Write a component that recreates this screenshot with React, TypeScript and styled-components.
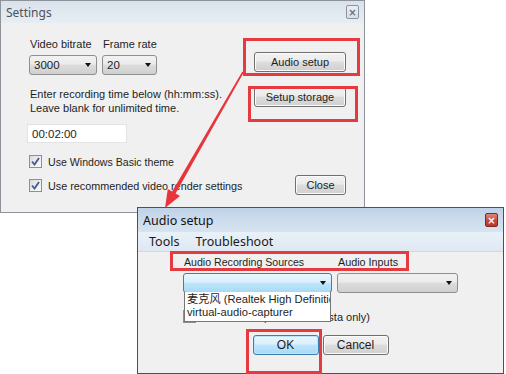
import styled, { createGlobalStyle, css } from "styled-components";

const GlobalStyle = createGlobalStyle`
  html, body {
    margin: 0;
    padding: 0;
    background: #ffffff;
  }
`;

const Canvas = styled.div`
  position: relative;
  width: 506px;
  height: 374px;
  overflow: hidden;
  background: #ffffff;
  font-family: "Liberation Sans", "Noto Sans CJK SC", sans-serif;
  font-size: 11px;
  color: #1e1e1e;
`;

const Window = styled.div<{ $left: number; $top: number; $width: number; $height: number; $active?: boolean }>`
  position: absolute;
  left: ${(p) => p.$left}px;
  top: ${(p) => p.$top}px;
  width: ${(p) => p.$width}px;
  height: ${(p) => p.$height}px;
  box-sizing: border-box;
  display: flex;
  flex-direction: column;
  background: #f0f0f0;
  border: 1px solid ${(p) => (p.$active ? "#4b5158" : "#8d9399")};
`;

const TitleBar = styled.div<{ $active?: boolean; $height: number }>`
  height: ${(p) => p.$height}px;
  flex: none;
  display: flex;
  align-items: center;
  justify-content: space-between;
  padding: 0 5px;
  font-family: "Noto Sans", sans-serif;
  background: ${(p) =>
    p.$active
      ? "linear-gradient(#bfd2e8, #cfdeee 60%, #d6e3f0)"
      : "linear-gradient(#d9e2ec, #e2e9f1 60%, #e7edf3)"};
`;

const TitleText = styled.span<{ $active?: boolean }>`
  font-size: ${(p) => (p.$active ? 12.5 : 12)}px;
  color: ${(p) => (p.$active ? "#111" : "#4c5259")};
`;

const CloseBox = styled.span<{ $active?: boolean }>`
  width: 13px;
  height: 14px;
  box-sizing: border-box;
  display: flex;
  align-items: center;
  justify-content: center;
  border-radius: 2px;
  font-family: "DejaVu Sans", sans-serif;
  font-size: 10px;
  font-weight: bold;
  ${(p) =>
    p.$active
      ? css`
          border: 1px solid #7d2a22;
          background: linear-gradient(#dc8a7e, #c5483a 55%, #b8382a);
          color: #fff;
        `
      : css`
          border: 1px solid #8b939c;
          background: linear-gradient(#e9eef3, #d8e0e8);
          color: #6b737c;
        `}
`;

const SettingsBody = styled.div`
  flex: 1;
  display: flex;
  justify-content: space-between;
`;

const LeftCol = styled.div`
  display: flex;
  flex-direction: column;
  padding: 13px 0 0 28px;
`;

const RightCol = styled.div`
  display: flex;
  flex-direction: column;
  align-items: flex-end;
  padding: 29px 18px 0 0;
`;

const PairGrid = styled.div<{ $cols: string; $gap: number }>`
  display: grid;
  grid-template-columns: ${(p) => p.$cols};
  column-gap: ${(p) => p.$gap}px;
`;

const FieldLabel = styled.span<{ $size?: number }>`
  font-size: ${(p) => p.$size ?? 11}px;
  line-height: 16px;
  padding-left: 1px;
  margin-bottom: 3px;
  white-space: nowrap;
`;

const Combo = styled.div<{ $focus?: boolean }>`
  position: relative;
  height: 20px;
  box-sizing: border-box;
  display: flex;
  align-items: center;
  justify-content: space-between;
  padding: 0 5px 0 4px;
  border-radius: 3px;
  font-size: 11.5px;
  ${(p) =>
    p.$focus
      ? css`
          border: 1px solid #3c7fb1;
          background: linear-gradient(#eaf6fd, #d9f0fc 45%, #bee6fd 50%, #a7d9f5);
        `
      : css`
          border: 1px solid #8e8f8f;
          background: linear-gradient(#f2f2f2, #ebebeb 45%, #dddddd 50%, #cfcfcf);
        `}
`;

const Caret = styled.span`
  width: 0;
  height: 0;
  border-left: 3.5px solid transparent;
  border-right: 3.5px solid transparent;
  border-top: 4px solid #111;
`;

const DropList = styled.div`
  position: absolute;
  top: 100%;
  left: 0;
  width: 100%;
  box-sizing: border-box;
  height: 30px;
  background: #fff;
  border: 1px solid #767676;
  border-top: none;
  padding: 1px 0 0 2px;
  overflow: hidden;
  z-index: 2;
`;

const ListItem = styled.div`
  font-size: 11.2px;
  line-height: 13px;
  white-space: nowrap;
`;

const Note = styled.p`
  margin: 12px 0 0 1px;
  font-size: 11px;
  line-height: 14px;
`;

const TimeInput = styled.div`
  margin: 9px 0 0 -2px;
  width: 100px;
  height: 19px;
  box-sizing: border-box;
  display: flex;
  align-items: center;
  padding-left: 4px;
  background: #fff;
  border: 1px solid #e2e3e4;
  font-size: 11.5px;
`;

const CheckRow = styled.div<{ $mt: number; $size: number }>`
  margin-top: ${(p) => p.$mt}px;
  display: flex;
  align-items: center;
  gap: 6px;
  font-size: ${(p) => p.$size}px;
  white-space: nowrap;
`;

const CheckBox = styled.span`
  width: 13px;
  height: 13px;
  box-sizing: border-box;
  flex: none;
  display: flex;
  align-items: center;
  justify-content: center;
  border: 1px solid #8f8f8f;
  background: linear-gradient(135deg, #dcdcdc, #fbfbfb);
`;

const Button = styled.div<{ $width: number; $mt?: number; $default?: boolean; $size?: number }>`
  width: ${(p) => p.$width}px;
  height: 20px;
  margin-top: ${(p) => p.$mt ?? 0}px;
  box-sizing: border-box;
  display: flex;
  align-items: center;
  justify-content: center;
  border-radius: 3px;
  font-size: ${(p) => p.$size ?? 11}px;
  ${(p) =>
    p.$default
      ? css`
          border: 1px solid #3c7fb1;
          background: linear-gradient(#eaf6fd, #d9f0fc 45%, #bee6fd 50%, #a7d9f5);
          box-shadow: inset 0 0 0 1px #bfe3f7;
        `
      : css`
          border: 1px solid #707070;
          background: linear-gradient(#f2f2f2, #ebebeb 45%, #dddddd 50%, #cfcfcf);
          box-shadow: inset 0 0 0 1px #fbfbfb;
        `}
`;

const MenuBar = styled.div`
  height: 19px;
  flex: none;
  display: flex;
  align-items: center;
  gap: 16px;
  padding-left: 11px;
  background: linear-gradient(#e9f0f8, #dfe8f2);
  border-bottom: 1px solid #cfd9e4;
  font-family: "Noto Sans", sans-serif;
  font-size: 12.5px;
  color: #1a1a1a;
`;

const AudioBody = styled.div`
  flex: 1;
  display: flex;
  flex-direction: column;
  padding: 2px 0 0 45px;
`;

const ButtonRow = styled.div`
  margin: 12px 0 0 -45px;
  display: flex;
  justify-content: center;
  gap: 4px;
`;

const Overlay = styled.svg`
  position: absolute;
  left: 0;
  top: 0;
  pointer-events: none;
`;

const Highlight = styled.div<{ $left: number; $top: number; $width: number; $height: number }>`
  position: absolute;
  left: ${(p) => p.$left}px;
  top: ${(p) => p.$top}px;
  width: ${(p) => p.$width}px;
  height: ${(p) => p.$height}px;
  box-sizing: border-box;
  border: 3px solid #e53a3f;
  pointer-events: none;
`;

function Tick() {
  return (
    <svg width="9" height="9" viewBox="0 0 9 9">
      <path d="M1 4.5 L3.5 7.5 L8 1" fill="none" stroke="#3f5a96" strokeWidth="1.8" />
    </svg>
  );
}

export default function App() {
  return (
    <Canvas>
      <GlobalStyle />

      <Window $left={0} $top={0} $width={365} $height={213}>
        <TitleBar $height={22}>
          <TitleText>Settings</TitleText>
          <CloseBox>×</CloseBox>
        </TitleBar>
        <SettingsBody>
          <LeftCol>
            <PairGrid $cols="68px 55px" $gap={5}>
              <FieldLabel>Video bitrate</FieldLabel>
              <FieldLabel>Frame rate</FieldLabel>
              <Combo>
                3000
                <Caret />
              </Combo>
              <Combo>
                20
                <Caret />
              </Combo>
            </PairGrid>
            <Note>
              Enter recording time below (hh:mm:ss).
              <br />
              Leave blank for unlimited time.
            </Note>
            <TimeInput>00:02:00</TimeInput>
            <CheckRow $mt={12} $size={10.6}>
              <CheckBox>
                <Tick />
              </CheckBox>
              Use Windows Basic theme
            </CheckRow>
            <CheckRow $mt={11} $size={10.8}>
              <CheckBox>
                <Tick />
              </CheckBox>
              Use recommended video render settings
            </CheckRow>
          </LeftCol>
          <RightCol>
            <Button $width={92}>Audio setup</Button>
            <Button $width={92} $mt={15}>
              Setup storage
            </Button>
            <Button $width={51} $mt={68}>
              Close
            </Button>
          </RightCol>
        </SettingsBody>
      </Window>

      <Overlay width="506" height="374">
        <polygon
          points="242.3,71.6 243.7,72.4 175.6,193.4 180,195.9 165,208 167.8,188.9 172.2,191.4"
          fill="#e8343a"
        />
      </Overlay>

      <Window $left={137} $top={207} $width={367} $height={167} $active>
        <TitleBar $height={24} $active>
          <TitleText $active>Audio setup</TitleText>
          <CloseBox $active>×</CloseBox>
        </TitleBar>
        <MenuBar>
          <span>Tools</span>
          <span>Troubleshoot</span>
        </MenuBar>
        <AudioBody>
          <PairGrid $cols="149px 121px" $gap={5}>
            <FieldLabel $size={10.6}>Audio Recording Sources</FieldLabel>
            <FieldLabel $size={10.8}>Audio Inputs</FieldLabel>
            <Combo $focus>
              <span />
              <Caret />
              <DropList>
                <ListItem>麦克风 (Realtek High Definition Audio)</ListItem>
                <ListItem>virtual-audio-capturer</ListItem>
              </DropList>
            </Combo>
            <Combo>
              <span />
              <Caret />
            </Combo>
          </PairGrid>
          <CheckRow $mt={17} $size={11}>
            <CheckBox />
            Auto Detect (Win 8 / 7 / Vista only)
          </CheckRow>
          <ButtonRow>
            <Button $width={66} $default $size={12}>
              OK
            </Button>
            <Button $width={66} $size={12}>
              Cancel
            </Button>
          </ButtonRow>
        </AudioBody>
      </Window>

      <Highlight $left={243} $top={38} $width={117} $height={38} />
      <Highlight $left={248} $top={86} $width={110} $height={36} />
      <Highlight $left={170} $top={251} $width={239} $height={20} />
      <Highlight $left={246} $top={329} $width={76} $height={45} />
    </Canvas>
  );
}
